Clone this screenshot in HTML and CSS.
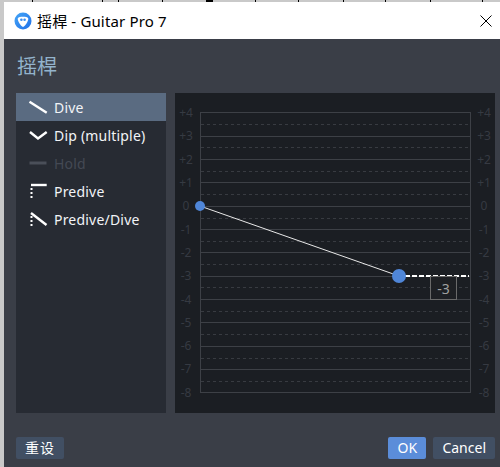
FILE: index.html
```html
<!DOCTYPE html>
<html lang="zh-CN">
<head>
    <meta charset="UTF-8">
    <title>摇桿 - Guitar Pro 7</title>
    <link rel="stylesheet" href="styles.css">
</head>
<body>
    <!-- bit of the score window showing behind the dialog -->
    <svg class="backdrop-ticks" width="500" height="2" viewBox="0 0 500 2">
        <path d="M32.500 0V2M102.500 0V2M118.500 0V2M162.500 0V2M255.500 0V2M298.500 0V2M343.500 0V2M385.500 0V2M430.500 0V2M482.500 0V2" stroke="#000" fill="none"/>
        <path d="M206 0H213V2H206Z" fill="#000"/>
    </svg>

    <div class="dialog">
        <div class="titlebar">
            <svg class="app-logo" width="18" height="18" viewBox="0 0 18 18">
                <defs>
                    <linearGradient id="logoFill" x1="0" y1="0" x2="1" y2="1">
                        <stop offset="0" stop-color="#45a6f7"/>
                        <stop offset="1" stop-color="#1f6fe8"/>
                    </linearGradient>
                </defs>
                <circle cx="9" cy="9" r="8.5" fill="url(#logoFill)"/>
                <path d="M3.8 6.2C5 4.4 13 4.4 14.2 6.2C15 8 11 14.5 9 15C7 14.5 3 8 3.8 6.2Z" fill="#fff"/>
                <circle cx="7.4" cy="7.8" r="1.3" fill="#3a8df0"/>
                <circle cx="10.6" cy="7.8" r="1.3" fill="#3a8df0"/>
            </svg>
            <span class="title-text">摇桿 - Guitar Pro 7</span>
            <svg class="close-btn" width="12" height="12" viewBox="0 0 12 12">
                <path d="M0.5 0.5L11.5 11.5M11.5 0.5L0.5 11.5" stroke="#000" stroke-width="1" fill="none"/>
            </svg>
        </div>

        <div class="dialog-body">
            <h1 class="heading">摇桿</h1>

            <div class="content">
                <ul class="type-list">
                    <li class="type-item selected">
                        <svg class="type-icon" width="20" height="20" viewBox="0 0 20 20"><path d="M1.500 4.700L18.700 15.700" class="icon-line"/></svg>
                        Dive
                    </li>
                    <li class="type-item">
                        <svg class="type-icon" width="20" height="20" viewBox="0 0 20 20"><path d="M2 7L10 13.500L18.700 7" class="icon-line"/></svg>
                        Dip (multiple)
                    </li>
                    <li class="type-item disabled">
                        <svg class="type-icon" width="20" height="20" viewBox="0 0 20 20"><path d="M1.500 10H18.500" class="icon-line"/></svg>
                        Hold
                    </li>
                    <li class="type-item">
                        <svg class="type-icon" width="20" height="20" viewBox="0 0 20 20"><path d="M3 4H18.700" class="icon-line"/><path d="M3.500 7V17" class="icon-dots"/></svg>
                        Predive
                    </li>
                    <li class="type-item">
                        <svg class="type-icon" width="20" height="20" viewBox="0 0 20 20"><path d="M3 4L18.500 16" class="icon-line"/><path d="M3.500 7V17" class="icon-dots"/></svg>
                        Predive/Dive
                    </li>
                </ul>

                <div class="graph-panel">
                    <svg class="graph" width="320" height="320" viewBox="175 93 320 320">
                        <g class="grid-solid">
                            <path d="M200.500 112V392.500M470.500 112V392.500"/>
                            <path d="M200 112.500H471M200 136.500H471M200 159.500H471M200 182.500H471M200 206.500H471M200 229.500H471M200 252.500H471M200 276.500H471M200 299.500H471M200 322.500H471M200 346.500H471M200 369.500H471M200 392.500H471"/>
                        </g>
                        <path class="grid-dash" d="M201 124.500H470M201 147.500H470M201 171.500H470M201 194.500H470M201 218.500H470M201 241.500H470M201 264.500H470M201 287.500H470M201 311.500H470M201 334.500H470M201 358.500H470M201 381.500H470"/>

                        <g class="axis-labels left">
                            <text x="186" y="117">+4</text>
                            <text x="186" y="140">+3</text>
                            <text x="186" y="164">+2</text>
                            <text x="186" y="187">+1</text>
                            <text x="186" y="210">0</text>
                            <text x="186" y="234">-1</text>
                            <text x="186" y="257">-2</text>
                            <text x="186" y="280">-3</text>
                            <text x="186" y="304">-4</text>
                            <text x="186" y="327">-5</text>
                            <text x="186" y="350">-6</text>
                            <text x="186" y="373">-7</text>
                            <text x="186" y="397">-8</text>
                        </g>
                        <g class="axis-labels right">
                            <text x="484" y="117">+4</text>
                            <text x="484" y="140">+3</text>
                            <text x="484" y="164">+2</text>
                            <text x="484" y="187">+1</text>
                            <text x="484" y="210">0</text>
                            <text x="484" y="234">-1</text>
                            <text x="484" y="257">-2</text>
                            <text x="484" y="280">-3</text>
                            <text x="484" y="304">-4</text>
                            <text x="484" y="327">-5</text>
                            <text x="484" y="350">-6</text>
                            <text x="484" y="373">-7</text>
                            <text x="484" y="397">-8</text>
                        </g>

                        <line class="curve" x1="200" y1="206" x2="399" y2="276"/>
                        <line class="curve-hold" x1="405" y1="276" x2="469" y2="276"/>
                        <circle class="point" cx="200" cy="206" r="5"/>
                        <circle class="point" cx="399" cy="276" r="7"/>

                        <rect class="value-box" x="430.500" y="276.500" width="26" height="23"/>
                        <text class="value-text" x="443.500" y="294">-3</text>
                    </svg>
                </div>
            </div>

            <div class="footer">
                <button class="btn cjk">重设</button>
                <div class="footer-right">
                    <button class="btn primary">OK</button>
                    <button class="btn">Cancel</button>
                </div>
            </div>
        </div>
    </div>
</body>
</html>
```

FILE: styles.css
```css
html, body {
    height: 100%;
}

body {
    margin: 0;
    padding: 2px 0 0 4px;
    box-sizing: border-box;
    background-color: #c9c9c9;
    font-family: "Noto Sans", "Noto Sans CJK SC", sans-serif;
    overflow: hidden;
}

.backdrop-ticks {
    position: absolute;
    top: 0;
    left: 0;
}

.dialog {
    height: 465px;
    display: flex;
    flex-direction: column;
}

.titlebar {
    height: 37px;
    flex: none;
    background-color: #fff;
    display: flex;
    align-items: center;
    padding: 0 8px 0 10px;
    color: #000;
}

.app-logo {
    margin-right: 5px;
}

.title-text {
    font-size: 15px;
    letter-spacing: 0.15px;
    flex: 1;
}

.dialog-body {
    flex: 1;
    background-color: #3a3e47;
    padding: 0 5px 8px 12px;
    display: flex;
    flex-direction: column;
}

.heading {
    margin: 0 0 0 1px;
    height: 54px;
    line-height: 54px;
    font-size: 20px;
    font-weight: normal;
    font-family: "Noto Sans CJK SC", sans-serif;
    color: #93b3cc;
}

.content {
    display: flex;
    gap: 9px;
    height: 320px;
}

.type-list {
    list-style: none;
    margin: 0;
    padding: 0;
    width: 150px;
    background-color: #272b33;
}

.type-item {
    height: 28px;
    display: flex;
    align-items: center;
    gap: 6px;
    padding-left: 12px;
    font-size: 14px;
    letter-spacing: 0.2px;
    color: #f2f4f7;
}

.type-item.selected {
    background-color: #5a6b81;
}

.type-item.disabled {
    color: #444954;
}

.type-icon {
    fill: none;
}

.icon-line {
    stroke: #fff;
    stroke-width: 2.4;
    fill: none;
}

.icon-dots {
    stroke: #fff;
    stroke-width: 2;
    stroke-dasharray: 2 2;
    fill: none;
}

.disabled .icon-line {
    stroke: #4a4f59;
    stroke-width: 3;
}

.graph-panel {
    width: 320px;
    height: 320px;
    background-color: #1b1e23;
}

.graph {
    display: block;
}

.grid-solid path {
    stroke: #3d4046;
    stroke-width: 1;
    fill: none;
}

.grid-dash {
    stroke: #383b41;
    stroke-width: 1;
    stroke-dasharray: 3 3;
    fill: none;
}

.axis-labels text {
    font-size: 12px;
    fill: #363a42;
    text-anchor: middle;
}

.curve {
    stroke: #e8e8e8;
    stroke-width: 1;
}

.curve-hold {
    stroke: #fff;
    stroke-width: 2;
    stroke-dasharray: 5 2;
}

.point {
    fill: #4f86d8;
}

.value-box {
    fill: #1e2024;
    stroke: #6a6a6a;
    stroke-width: 1;
}

.value-text {
    font-size: 14px;
    fill: #a0a0a0;
    text-anchor: middle;
}

.footer {
    margin-top: 24px;
    display: flex;
    justify-content: space-between;
}

.footer-right {
    display: flex;
    gap: 7px;
}

.btn {
    height: 22px;
    min-width: 38px;
    padding: 0 9px;
    border: none;
    border-radius: 2px;
    background-color: #414f63;
    color: #fff;
    font-family: "Noto Sans", "Noto Sans CJK SC", sans-serif;
    font-size: 14px;
    line-height: 22px;
}

.btn.cjk {
    min-width: 48px;
    padding: 0;
    letter-spacing: 1px;
}

.btn.primary {
    background-color: #5b8dd9;
}
```
